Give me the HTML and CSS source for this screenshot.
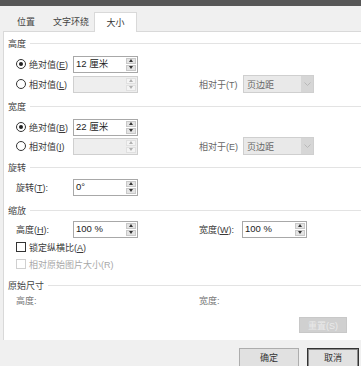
FILE: index.html
```html
<!DOCTYPE html>
<html lang="zh-CN">
<head>
  <meta charset="UTF-8" />
  <title>布局 - 大小</title>
  <link rel="stylesheet" href="styles.css">
</head>
<body>
  <div class="titlebar"></div>

  <div class="tabs">
    <span class="tab t1">位置</span>
    <span class="tab t2">文字环绕</span>
    <span class="tab t3 active">大小</span>
  </div>

  <div class="panel">
    <div class="legend s-height">高度</div>
    <div class="row r1">
      <label class="opt"><span class="radio on"></span><span>绝对值(<u>E</u>)</span></label>
      <div class="spin"><span class="val">12 厘米</span><span class="arrows"><i class="up"></i><i class="down"></i></span></div>
    </div>
    <div class="row r2">
      <label class="opt"><span class="radio"></span><span>相对值(<u>L</u>)</span></label>
      <div class="spin off"><span class="val"></span><span class="arrows"><i class="up"></i><i class="down"></i></span></div>
      <span class="rel">相对于(T)</span>
      <div class="select">页边距<span class="drop"><svg width="7" height="4" viewBox="0 0 7 4"><polyline points="0.5,0.5 3.5,3.5 6.5,0.5" fill="none" stroke="#b8b8b8" stroke-width="1"/></svg></span></div>
    </div>

    <div class="legend s-width">宽度</div>
    <div class="row r1">
      <label class="opt"><span class="radio on"></span><span>绝对值(<u>B</u>)</span></label>
      <div class="spin"><span class="val">22 厘米</span><span class="arrows"><i class="up"></i><i class="down"></i></span></div>
    </div>
    <div class="row r2b">
      <label class="opt"><span class="radio"></span><span>相对值(<u>I</u>)</span></label>
      <div class="spin off"><span class="val"></span><span class="arrows"><i class="up"></i><i class="down"></i></span></div>
      <span class="rel">相对于(E)</span>
      <div class="select">页边距<span class="drop"><svg width="7" height="4" viewBox="0 0 7 4"><polyline points="0.5,0.5 3.5,3.5 6.5,0.5" fill="none" stroke="#b8b8b8" stroke-width="1"/></svg></span></div>
    </div>

    <div class="legend s-rotate">旋转</div>
    <div class="row r-rotate">
      <span class="opt"><span>旋转(<u>T</u>):</span></span>
      <div class="spin"><span class="val">0°</span><span class="arrows"><i class="up"></i><i class="down"></i></span></div>
    </div>

    <div class="legend s-scale">缩放</div>
    <div class="row r-scale">
      <span class="opt"><span>高度(<u>H</u>):</span></span>
      <div class="spin"><span class="val">100 %</span><span class="arrows"><i class="up"></i><i class="down"></i></span></div>
      <span class="rel narrow">宽度(<u>W</u>):</span>
      <div class="spin"><span class="val">100 %</span><span class="arrows"><i class="up"></i><i class="down"></i></span></div>
    </div>
    <div class="row check c1">
      <span class="box"></span><span>锁定纵横比(<u>A</u>)</span>
    </div>
    <div class="row check c2 disabled">
      <span class="box"></span><span>相对原始图片大小(R)</span>
    </div>

    <div class="legend s-orig">原始尺寸</div>
    <div class="row r-orig">
      <span class="orig-h">高度:</span>
      <span>宽度:</span>
    </div>
    <div class="reset-row">
      <span class="reset">重置(S)</span>
    </div>
  </div>

  <div class="footer">
    <span class="btn ok">确定</span>
    <span class="btn cancel">取消</span>
  </div>
</body>
</html>
```

FILE: styles.css
```css
* { box-sizing: border-box; }
body {
  margin: 0;
  width: 361px;
  height: 366px;
  overflow: hidden;
  background: #f0f0f0;
  color: #3a3a3a;
  font-family: "Liberation Sans", "Noto Sans CJK SC", sans-serif;
  font-size: 9px;
}
u { text-decoration: underline; text-underline-offset: 1px; }

.titlebar { height: 6px; background: #575757; }

.tabs {
  height: 25px;
  display: flex;
  align-items: flex-end;
  padding-left: 4px;
}
.tab {
  height: 19px;
  display: flex;
  align-items: center;
  justify-content: center;
  color: #444;
}
.t1 { width: 44px; }
.t2 { width: 46px; }
.t3 { width: 43px; }
.tab.active {
  height: 20px;
  margin-bottom: -1px;
  background: #fff;
  border: 1px solid #d9d9d9;
  border-bottom: none;
  position: relative;
  z-index: 1;
  color: #333;
}

.panel {
  margin-left: 3px;
  height: 309px;
  background: #fff;
  border-top: 1px solid #d9d9d9;
  border-left: 1px solid #d9d9d9;
  padding: 4px 0 0 4px;
}

.legend {
  height: 14px;
  display: flex;
  align-items: center;
  gap: 4px;
  color: #444;
}
.legend::after {
  content: "";
  flex: 1;
  height: 1px;
  background: #e3e3e3;
}
.s-width { margin-top: 6px; }
.s-rotate { margin-top: 5px; }
.s-scale { margin-top: 7px; }
.s-orig { margin-top: 7px; }

.row {
  height: 18px;
  display: flex;
  align-items: center;
  padding-left: 8px;
}
.r1 { margin-top: 5px; }
.r2 { margin-top: 2px; }
.r2b { margin-top: 1px; }
.r-rotate { margin-top: 4px; }
.r-scale { margin-top: 3px; }

.opt {
  width: 57px;
  display: flex;
  align-items: center;
  gap: 3px;
  white-space: nowrap;
}
.radio {
  width: 10px;
  height: 10px;
  border: 1px solid #333;
  border-radius: 50%;
  display: flex;
  align-items: center;
  justify-content: center;
}
.radio.on::after {
  content: "";
  width: 4px;
  height: 4px;
  border-radius: 50%;
  background: #222;
}

.spin {
  width: 65px;
  height: 17px;
  border: 1px solid #a8a8a8;
  display: flex;
  background: #fff;
}
.spin .val {
  flex: 1;
  padding-left: 2px;
  line-height: 14px;
  color: #222;
  font-size: 9.5px;
}
.arrows {
  width: 10px;
  margin: 1px 1px 1px 0;
  display: flex;
  flex-direction: column;
  gap: 1px;
}
.arrows i {
  flex: 1;
  background: #e4e4e4;
  border: 1px solid #c8c8c8;
  display: flex;
  align-items: center;
  justify-content: center;
}
.arrows .up::after {
  content: "";
  border-left: 2.5px solid transparent;
  border-right: 2.5px solid transparent;
  border-bottom: 3px solid #333;
}
.arrows .down::after {
  content: "";
  border-left: 2.5px solid transparent;
  border-right: 2.5px solid transparent;
  border-top: 3px solid #333;
}
.spin.off { background: #eeeeee; border-color: #cfcfcf; }
.spin.off .arrows i { background: #f4f4f4; border-color: #e0e0e0; }
.spin.off .arrows .up::after { border-bottom-color: #b0b0b0; }
.spin.off .arrows .down::after { border-top-color: #b0b0b0; }

.rel {
  margin-left: 61px;
  width: 44px;
  color: #666;
  white-space: nowrap;
}
.rel.narrow { width: 43px; color: #3a3a3a; }

.select {
  width: 71px;
  height: 18px;
  border: 1px solid #cfcfcf;
  background: #e9e9e9;
  display: flex;
  align-items: center;
  padding-left: 3px;
  color: #666;
}
.drop {
  margin-left: auto;
  width: 12px;
  height: 100%;
  background: #d6d6d6;
  display: flex;
  align-items: center;
  justify-content: center;
}

.check { height: 14px; gap: 3px; }
.c1 { margin-top: 2px; }
.c2 { margin-top: 3px; }
.box {
  width: 10px;
  height: 10px;
  border: 1px solid #333;
}
.disabled { color: #a8a8a8; }
.disabled .box { border-color: #d0d0d0; }

.r-orig { margin-top: 1px; height: 14px; color: #777; }
.orig-h { width: 183px; }

.reset-row {
  margin-top: 10px;
  display: flex;
  justify-content: flex-end;
  padding-right: 14px;
}
.reset {
  width: 48px;
  height: 16px;
  background: #d0d0d0;
  border: 1px solid #c8c8c8;
  color: #eaeaea;
  display: flex;
  align-items: center;
  justify-content: center;
}

.footer {
  display: flex;
  gap: 8px;
  padding: 8px 0 0 239px;
}
.btn {
  height: 22px;
  line-height: 18px;
  text-align: center;
  background: #e1e1e1;
  border: 1px solid #adadad;
  color: #333;
}
.ok { width: 60px; }
.cancel {
  width: 52px;
  border-color: #333;
  box-shadow: inset 0 0 0 1px #8a8a8a;
}
```
